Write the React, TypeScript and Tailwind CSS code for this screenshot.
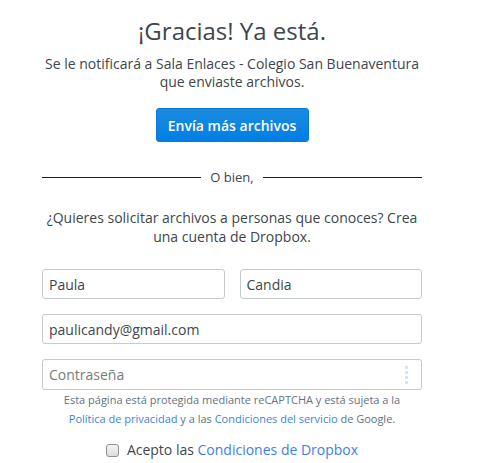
import React from "react";

export default function App() {
  const font = { fontFamily: '"Open Sans", "Noto Sans", sans-serif' };
  return (
    <div className="w-[480px] h-[463px] bg-white overflow-hidden" style={font}>
      <div className="ml-[42px] w-[380px] flex flex-col items-center text-[#3d464d]">
        <h1 className="mt-[15px] text-[24px] leading-[32px] font-normal text-[#3d464d]">
          ¡Gracias! Ya está.
        </h1>
        <p className="mt-[8px] text-[14px] leading-[18px] text-center">
          Se le notificará a Sala Enlaces - Colegio San Buenaventura
          <br />
          que enviaste archivos.
        </p>
        <button className="mt-[17px] w-[153px] h-[34px] rounded-[3px] bg-gradient-to-b from-[#1a8ce0] to-[#007ee5] text-white text-[14px] font-semibold border border-[#0a78d6]">
          Envía más archivos
        </button>
        <div className="mt-[26px] w-full flex items-center gap-[9px]">
          <div className="flex-1 h-px bg-[#1f1f1f]" />
          <span className="text-[13px] leading-[18px] text-[#3d464d]">O bien,</span>
          <div className="flex-1 h-px bg-[#1f1f1f]" />
        </div>
        <p className="mt-[23px] text-[14px] leading-[18.5px] text-center">
          ¿Quieres solicitar archivos a personas que conoces? Crea
          <br />
          una cuenta de Dropbox.
        </p>
        <div className="mt-[23px] w-full flex gap-[15px]">
          <input
            readOnly
            value="Paula"
            className="flex-1 min-w-0 h-[30px] rounded-[3px] border border-[#c4cad0] px-[6px] text-[14px] text-[#3d464d] outline-none"
            style={font}
          />
          <input
            readOnly
            value="Candia"
            className="flex-1 min-w-0 h-[30px] rounded-[3px] border border-[#c4cad0] px-[6px] text-[14px] text-[#3d464d] outline-none"
            style={font}
          />
        </div>
        <input
          readOnly
          value="paulicandy@gmail.com"
          className="mt-[15px] w-full h-[30px] rounded-[3px] border border-[#c4cad0] px-[6px] text-[14px] text-[#3d464d] outline-none"
          style={font}
        />
        <div className="mt-[15px] w-full h-[31px] rounded-[3px] border border-[#c4cad0] flex items-center px-[6px]">
          <span className="flex-1 text-[14px] text-[#787c80]">Contraseña</span>
          <div className="flex flex-col gap-[2px] mr-[7px]">
            <div className="w-[3px] h-[3px] bg-[#d3e6f7]" />
            <div className="w-[3px] h-[3px] bg-[#d3e6f7]" />
            <div className="w-[3px] h-[3px] bg-[#d3e6f7]" />
            <div className="w-[3px] h-[3px] bg-[#d3e6f7]" />
          </div>
        </div>
        <p className="mt-[1px] text-[11px] leading-[18.5px] text-center text-[#637282]">
          Esta página está protegida mediante reCAPTCHA y está sujeta a la
          <br />
          <span className="text-[#3d7fe6]">Política de privacidad</span> y a las{" "}
          <span className="text-[#3d7fe6]">Condiciones del servicio</span> de Google.
        </p>
        <div className="mt-[13px] flex items-center gap-[8px]">
          <div className="w-[13px] h-[13px] rounded-[3px] border border-[#8c9196] bg-gradient-to-b from-[#f4f4f4] to-[#dedede]" />
          <span className="text-[14px] leading-[18px] text-[#3d464d]">
            Acepto las <span className="text-[#3d7fe6]">Condiciones de Dropbox</span>
          </span>
        </div>
      </div>
    </div>
  );
}
